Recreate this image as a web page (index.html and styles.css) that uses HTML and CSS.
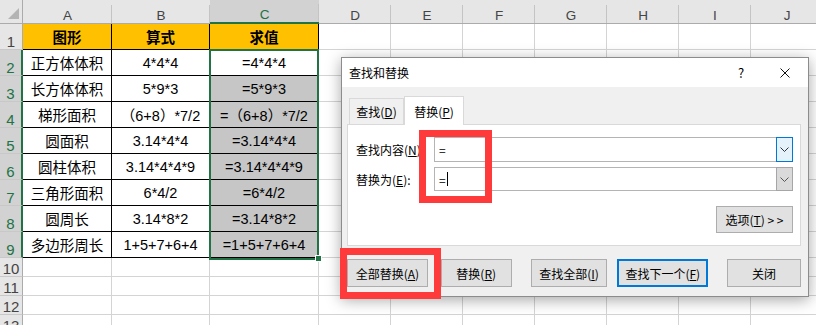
FILE: index.html
```html
<!DOCTYPE html>
<html lang="zh-CN">
<head>
  <meta charset="UTF-8" />
  <title>查找和替换</title>
  <link rel="stylesheet" href="styles.css">
</head>
<body>
  <div class="page">
    <div class="sheet">
      <div class="corner"><span class="tri"></span></div>
      <div class="ch">A</div><div class="ch">B</div><div class="ch on">C</div><div class="ch">D</div><div class="ch">E</div><div class="ch">F</div><div class="ch">G</div><div class="ch">H</div><div class="ch">I</div><div class="ch">J</div>

      <div class="rh">1</div>
      <div class="c t hd">图形</div><div class="c t hd">算式</div><div class="c t hd">求值</div>
      <div class="c"></div><div class="c"></div><div class="c"></div><div class="c"></div><div class="c"></div><div class="c"></div><div class="c"></div>

      <div class="rh on">2</div>
      <div class="c t">正方体体积</div><div class="c t">4*4*4</div>
      <div class="c t act">=4*4*4<div class="selbox"><span class="handle"></span></div></div>
      <div class="c"></div><div class="c"></div><div class="c"></div><div class="c"></div><div class="c"></div><div class="c"></div><div class="c"></div>

      <div class="rh on">3</div>
      <div class="c t">长方体体积</div><div class="c t">5*9*3</div><div class="c t sel">=5*9*3</div>
      <div class="c"></div><div class="c"></div><div class="c"></div><div class="c"></div><div class="c"></div><div class="c"></div><div class="c"></div>

      <div class="rh on">4</div>
      <div class="c t">梯形面积</div><div class="c t">（6+8）*7/2</div><div class="c t sel">=（6+8）*7/2</div>
      <div class="c"></div><div class="c"></div><div class="c"></div><div class="c"></div><div class="c"></div><div class="c"></div><div class="c"></div>

      <div class="rh on">5</div>
      <div class="c t">圆面积</div><div class="c t">3.14*4*4</div><div class="c t sel">=3.14*4*4</div>
      <div class="c"></div><div class="c"></div><div class="c"></div><div class="c"></div><div class="c"></div><div class="c"></div><div class="c"></div>

      <div class="rh on">6</div>
      <div class="c t">圆柱体积</div><div class="c t">3.14*4*4*9</div><div class="c t sel">=3.14*4*4*9</div>
      <div class="c"></div><div class="c"></div><div class="c"></div><div class="c"></div><div class="c"></div><div class="c"></div><div class="c"></div>

      <div class="rh on">7</div>
      <div class="c t">三角形面积</div><div class="c t">6*4/2</div><div class="c t sel">=6*4/2</div>
      <div class="c"></div><div class="c"></div><div class="c"></div><div class="c"></div><div class="c"></div><div class="c"></div><div class="c"></div>

      <div class="rh on">8</div>
      <div class="c t">圆周长</div><div class="c t">3.14*8*2</div><div class="c t sel">=3.14*8*2</div>
      <div class="c"></div><div class="c"></div><div class="c"></div><div class="c"></div><div class="c"></div><div class="c"></div><div class="c"></div>

      <div class="rh on">9</div>
      <div class="c t">多边形周长</div><div class="c t">1+5+7+6+4</div><div class="c t sel">=1+5+7+6+4</div>
      <div class="c"></div><div class="c"></div><div class="c"></div><div class="c"></div><div class="c"></div><div class="c"></div><div class="c"></div>

      <div class="rh">10</div>
      <div class="c"></div><div class="c"></div><div class="c"></div><div class="c"></div><div class="c"></div><div class="c"></div><div class="c"></div><div class="c"></div><div class="c"></div><div class="c"></div>
      <div class="rh">11</div>
      <div class="c"></div><div class="c"></div><div class="c"></div><div class="c"></div><div class="c"></div><div class="c"></div><div class="c"></div><div class="c"></div><div class="c"></div><div class="c"></div>
      <div class="rh">12</div>
      <div class="c"></div><div class="c"></div><div class="c"></div><div class="c"></div><div class="c"></div><div class="c"></div><div class="c"></div><div class="c"></div><div class="c"></div><div class="c"></div>
      <div class="rh">13</div>
      <div class="c"></div><div class="c"></div><div class="c"></div><div class="c"></div><div class="c"></div><div class="c"></div><div class="c"></div><div class="c"></div><div class="c"></div><div class="c"></div>
    </div>

    <div class="dialog">
      <div class="titlebar">
        <span class="title">查找和替换</span>
        <span class="help">?</span>
        <span class="close">
          <svg width="10" height="10" viewBox="0 0 10 10">
            <path d="M0.5 0.5 L9.5 9.5 M9.5 0.5 L0.5 9.5" stroke="#111" stroke-width="1" fill="none" />
          </svg>
        </span>
      </div>
      <div class="body">
        <div class="tabs">
          <div class="tab">查找(<u>D</u>)</div>
          <div class="tab active">替换(<u>P</u>)</div>
        </div>
        <div class="panel">
          <div class="field">
            <span class="label">查找内容(<u>N</u>)</span>
            <div class="combo">
              <span class="val">=</span>
              <span class="drop focus">
                <svg width="9" height="5" viewBox="0 0 9 5"><polyline points="0.5,0.5 4.5,4.5 8.5,0.5" stroke="#333" fill="none" /></svg>
              </span>
            </div>
          </div>
          <div class="field second">
            <span class="label">替换为(<u>E</u>):</span>
            <div class="combo">
              <span class="val">=<span class="caret"></span></span>
              <span class="drop">
                <svg width="9" height="5" viewBox="0 0 9 5"><polyline points="0.5,0.5 4.5,4.5 8.5,0.5" stroke="#555" fill="none" /></svg>
              </span>
            </div>
          </div>
          <div class="options">
            <button class="btn opt">选项(<u>T</u>) &gt; &gt;</button>
          </div>
        </div>
        <div class="buttons">
          <button class="btn b1">全部替换(<u>A</u>)</button>
          <button class="btn b2">替换(<u>R</u>)</button>
          <button class="btn b3">查找全部(<u>I</u>)</button>
          <button class="btn b4 default">查找下一个(<u>F</u>)</button>
          <button class="btn b5">关闭</button>
        </div>
      </div>
    </div>

    <div class="mark mark-find"></div>
    <div class="mark mark-all"></div>
  </div>
</body>
</html>
```

FILE: styles.css
```css
body {
  margin: 0;
  font-family: "Noto Sans CJK SC", sans-serif;
  color: #000;
}
.page {
  position: relative;
  width: 816px;
  height: 325px;
  overflow: hidden;
  background: #fff;
}

/* spreadsheet */
.sheet {
  display: grid;
  grid-template-columns: 23px 89px 98px 109px repeat(7, 72px);
  grid-template-rows: 24px repeat(9, 26px) repeat(4, 19px);
  font-family: "Liberation Sans", "Noto Sans CJK SC", sans-serif;
  font-size: 14.5px;
}
.sheet > div {
  box-sizing: border-box;
}
.corner {
  background: #e6e6e6;
  border-right: 1px solid #ababab;
  border-bottom: 1px solid #ababab;
  display: flex;
  align-items: flex-end;
  justify-content: flex-end;
  padding: 0 3px 4px 0;
}
.tri {
  width: 11px;
  height: 11px;
  background: #b4b4b4;
  clip-path: polygon(100% 0, 100% 100%, 0 100%);
}
.ch {
  background: linear-gradient(#c4c4c4, #c4c4c4) right bottom / 1px 18px no-repeat, #e6e6e6;
  border-bottom: 1px solid #ababab;
  color: #444;
  font-size: 13.5px;
  display: flex;
  align-items: center;
  justify-content: center;
  padding-top: 7px;
}
.ch.on {
  background-color: #d2d2d2;
  color: #217346;
  border-bottom: 2px solid #217346;
}
.rh {
  background: #e6e6e6;
  border-right: 1px solid #ababab;
  border-bottom: 1px solid #c8c8c8;
  color: #444;
  font-size: 15px;
  line-height: 15px;
  display: flex;
  align-items: flex-end;
  justify-content: center;
}
.rh.on {
  background: #d2d2d2;
  color: #217346;
  border-right: 2px solid #217346;
}
.c {
  border-right: 1px solid #d4d4d4;
  border-bottom: 1px solid #d4d4d4;
  display: flex;
  align-items: center;
  justify-content: center;
  white-space: nowrap;
}
.t {
  border-color: #000;
}
.hd {
  background: #ffc000;
  font-weight: bold;
}
.sel {
  background: #c6c6c6;
}
.act {
  position: relative;
}
.selbox {
  position: absolute;
  left: -1px;
  top: -1px;
  width: 110px;
  height: 211px;
  box-sizing: border-box;
  border: 2px solid #217346;
  z-index: 1;
}
.handle {
  position: absolute;
  right: -5px;
  bottom: -4px;
  width: 5px;
  height: 5px;
  background: #217346;
  border: 1px solid #fff;
}

/* find & replace dialog */
.dialog {
  position: absolute;
  left: 341px;
  top: 57px;
  width: 468px;
  height: 240px;
  box-sizing: border-box;
  border: 1px solid #8c8c8c;
  background: #f0f0f0;
  box-shadow: 0 3px 14px rgba(0, 0, 0, 0.35);
  display: flex;
  flex-direction: column;
  font-size: 12px;
  z-index: 2;
}
.titlebar {
  height: 29px;
  background: #fff;
  display: flex;
  align-items: center;
  padding-left: 7px;
}
.title {
  flex: 1;
}
.help {
  width: 12px;
  text-align: center;
  font-size: 13px;
  margin-right: 15px;
}
.close {
  width: 46px;
  height: 29px;
  display: flex;
  align-items: center;
  justify-content: center;
}
.body {
  padding: 9px 7px 0 5px;
}
.tabs {
  display: flex;
  align-items: flex-end;
  height: 28px;
  padding-left: 2px;
}
.tab {
  box-sizing: border-box;
  width: 55px;
  height: 26px;
  border: 1px solid #d9d9d9;
  border-bottom: none;
  display: flex;
  align-items: center;
  justify-content: center;
}
.tab.active {
  position: relative;
  z-index: 1;
  width: 60px;
  height: 29px;
  margin-bottom: -1px;
  background: #fff;
}
.panel {
  box-sizing: border-box;
  height: 122px;
  background: #fff;
  border: 1px solid #d9d9d9;
  padding: 12px 7px 0 8px;
}
.field {
  display: flex;
  align-items: center;
  height: 25px;
}
.field.second {
  margin-top: 5px;
  height: 24px;
}
.label {
  width: 78px;
}
.combo {
  flex: 1;
  height: 100%;
  box-sizing: border-box;
  display: flex;
  border: 1px solid #b4b4b4;
  background: #fff;
}
.val {
  flex: 1;
  display: flex;
  align-items: center;
  padding-left: 4px;
}
.caret {
  width: 1px;
  height: 14px;
  background: #000;
  margin-left: 1px;
}
.drop {
  width: 17px;
  margin: -1px -1px -1px 0;
  box-sizing: border-box;
  border: 1px solid #a6a6a6;
  background: #dadada;
  display: flex;
  align-items: center;
  justify-content: center;
}
.drop.focus {
  border-color: #0078d7;
  background: #e5f1fb;
}
.options {
  display: flex;
  justify-content: flex-end;
  margin-top: 15px;
}
.btn {
  box-sizing: border-box;
  height: 28px;
  padding: 0;
  border: 1px solid #adadad;
  background: #e1e1e1;
  font-family: inherit;
  font-size: 12px;
  color: #000;
}
.opt {
  width: 77px;
  height: 27px;
}
.buttons {
  display: flex;
  margin-top: 13px;
}
.b1 { width: 81px; }
.b2 { width: 71px; margin-left: 13px; }
.b3 { width: 77px; margin-left: 19px; }
.b4 { width: 91px; margin-left: 10px; }
.b5 { width: 74px; margin-left: 19px; }
.default {
  border: 2px solid #0078d7;
}

/* red highlight frames */
.mark {
  position: absolute;
  box-sizing: border-box;
  border: 7px solid #fe3a3a;
  z-index: 3;
}
.mark-find {
  left: 419px;
  top: 130px;
  width: 73px;
  height: 73px;
}
.mark-all {
  left: 340px;
  top: 248px;
  width: 101px;
  height: 51px;
}
```
